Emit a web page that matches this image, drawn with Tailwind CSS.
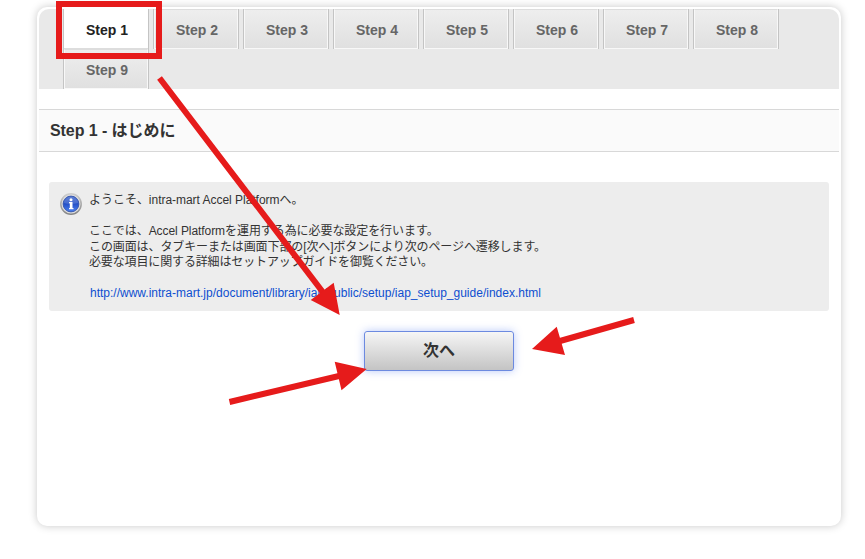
<!DOCTYPE html>
<html lang="ja">
<head>
<meta charset="utf-8">
<title>Setup</title>
<script src="https://cdn.jsdelivr.net/npm/@tailwindcss/browser@4"></script>
</head>
<body class="relative h-[559px] w-[865px] overflow-hidden bg-white font-['Liberation_Sans','Noto_Sans_CJK_JP',sans-serif] text-[#333]">
<main class="ml-[37px] mt-[7px] h-[519px] w-[804px] rounded-[10px] bg-white p-[2px] shadow-[0_0_8px_rgba(0,0,0,0.22)]">
  <nav class="flex h-20 flex-wrap content-start gap-x-1 rounded-t-[10px] bg-[#e9e9e9] pl-6 pr-9 text-sm font-bold text-[#666]">
    <div class="h-10 w-[86px] border-x border-[#c4c4c4]"><div class="flex h-10 items-center justify-center border-b border-[#ddd] bg-white pl-[2px] pt-[3px] text-[#222]">Step 1</div></div>
    <div class="h-10 w-[86px] border-x border-[#c4c4c4]"><div class="flex h-10 items-center justify-center border border-[#f8f8f8] border-t-[#ddd] bg-linear-to-b from-[#eee] to-[#e0e0e0] pl-[2px] pt-px">Step 2</div></div>
    <div class="h-10 w-[86px] border-x border-[#c4c4c4]"><div class="flex h-10 items-center justify-center border border-[#f8f8f8] border-t-[#ddd] bg-linear-to-b from-[#eee] to-[#e0e0e0] pl-[2px] pt-px">Step 3</div></div>
    <div class="h-10 w-[86px] border-x border-[#c4c4c4]"><div class="flex h-10 items-center justify-center border border-[#f8f8f8] border-t-[#ddd] bg-linear-to-b from-[#eee] to-[#e0e0e0] pl-[2px] pt-px">Step 4</div></div>
    <div class="h-10 w-[86px] border-x border-[#c4c4c4]"><div class="flex h-10 items-center justify-center border border-[#f8f8f8] border-t-[#ddd] bg-linear-to-b from-[#eee] to-[#e0e0e0] pl-[2px] pt-px">Step 5</div></div>
    <div class="h-10 w-[86px] border-x border-[#c4c4c4]"><div class="flex h-10 items-center justify-center border border-[#f8f8f8] border-t-[#ddd] bg-linear-to-b from-[#eee] to-[#e0e0e0] pl-[2px] pt-px">Step 6</div></div>
    <div class="h-10 w-[86px] border-x border-[#c4c4c4]"><div class="flex h-10 items-center justify-center border border-[#f8f8f8] border-t-[#ddd] bg-linear-to-b from-[#eee] to-[#e0e0e0] pl-[2px] pt-px">Step 7</div></div>
    <div class="h-10 w-[86px] border-x border-[#c4c4c4]"><div class="flex h-10 items-center justify-center border border-[#f8f8f8] border-t-[#ddd] bg-linear-to-b from-[#eee] to-[#e0e0e0] pl-[2px] pt-px">Step 8</div></div>
    <div class="h-10 w-[86px] border-x border-[#c4c4c4]"><div class="flex h-10 items-center justify-center border border-[#f8f8f8] border-t-[#ddd] bg-linear-to-b from-[#eee] to-[#e0e0e0] pl-[2px] pt-px">Step 9</div></div>
  </nav>
  <h1 class="mt-5 flex h-[43px] items-center border-y border-[#d8d8d8] bg-[#fafafa] pl-[11px] text-base font-bold tracking-[-0.07px]">Step 1 - はじめに</h1>
  <section class="mx-[10px] mt-[30px] flex h-[129px] rounded-[3px] bg-[#ededed] pl-[11px] pt-[11px] text-xs leading-[15.5px]">
    <svg class="mr-[7px] size-[22px] shrink-0" viewBox="0 0 22 22">
      <defs>
        <linearGradient id="ring" x2="0" y2="1"><stop stop-color="#cecece"/><stop offset="1" stop-color="#868686"/></linearGradient>
        <linearGradient id="blue" x2="0" y2="1"><stop stop-color="#4268cc"/><stop offset=".5" stop-color="#2450c8"/><stop offset="1" stop-color="#4c82f0"/></linearGradient>
      </defs>
      <circle cx="11" cy="11" r="10.2" fill="#dedede" stroke="url(#ring)" stroke-width="1.5"/>
      <circle cx="11" cy="11" r="7.9" fill="url(#blue)" stroke="#2849a5" stroke-width=".8"/>
      <path d="M4 10a7 6.500 0 0 1 14 0q-7 2-14 0" fill="#fff" fill-opacity=".15"/>
      <circle cx="11" cy="6.700" r="1.500" fill="#fff"/>
      <path d="M9 9h3.500v6h1v1.200H9V15h.8v-4.800H9z" fill="#fff"/>
    </svg>
    <div class="whitespace-nowrap">
      <p class="tracking-[-0.03px]">ようこそ、intra-mart Accel Platformへ。</p>
      <p class="mt-[15.5px] tracking-[-0.07px]">ここでは、Accel Platformを運用する為に必要な設定を行います。</p>
      <p class="tracking-[-0.1px]">この画面は、タブキーまたは画面下部の[次へ]ボタンにより次のページへ遷移します。</p>
      <p class="tracking-[-0.14px]">必要な項目に関する詳細はセットアップガイドを御覧ください。</p>
      <p class="mt-[15.5px] pl-px"><a class="text-[#0d4fd0]">http://www.intra-mart.jp/document/library/iap/public/setup/iap_setup_guide/index.html</a></p>
    </div>
  </section>
  <button class="mx-auto mt-5 block h-10 w-[150px] rounded-[3px] border border-[#6c8ae0] bg-linear-to-b from-[#f6f6f6] to-[#c4c4c4] text-base font-bold shadow-[0_0_8px_rgba(80,120,240,0.4)]">次へ</button>
</main>
<svg class="pointer-events-none absolute left-0 top-0" width="865" height="559" fill="#e61b1b" stroke="none">
  <rect x="59" y="4" width="100" height="52" fill="none" stroke="#e61b1b" stroke-width="6"/>
  <path d="M159.500 78L325 295M634 320L560 341M229.500 402L339 376" stroke="#e61b1b" stroke-width="6"/>
  <path d="M339.700 315L310.700 300L333.700 282.700ZM532 349L556.700 326.700L565 355ZM366.700 369L334.700 361.700L341.500 390.300Z"/>
</svg>
</body>
</html>
